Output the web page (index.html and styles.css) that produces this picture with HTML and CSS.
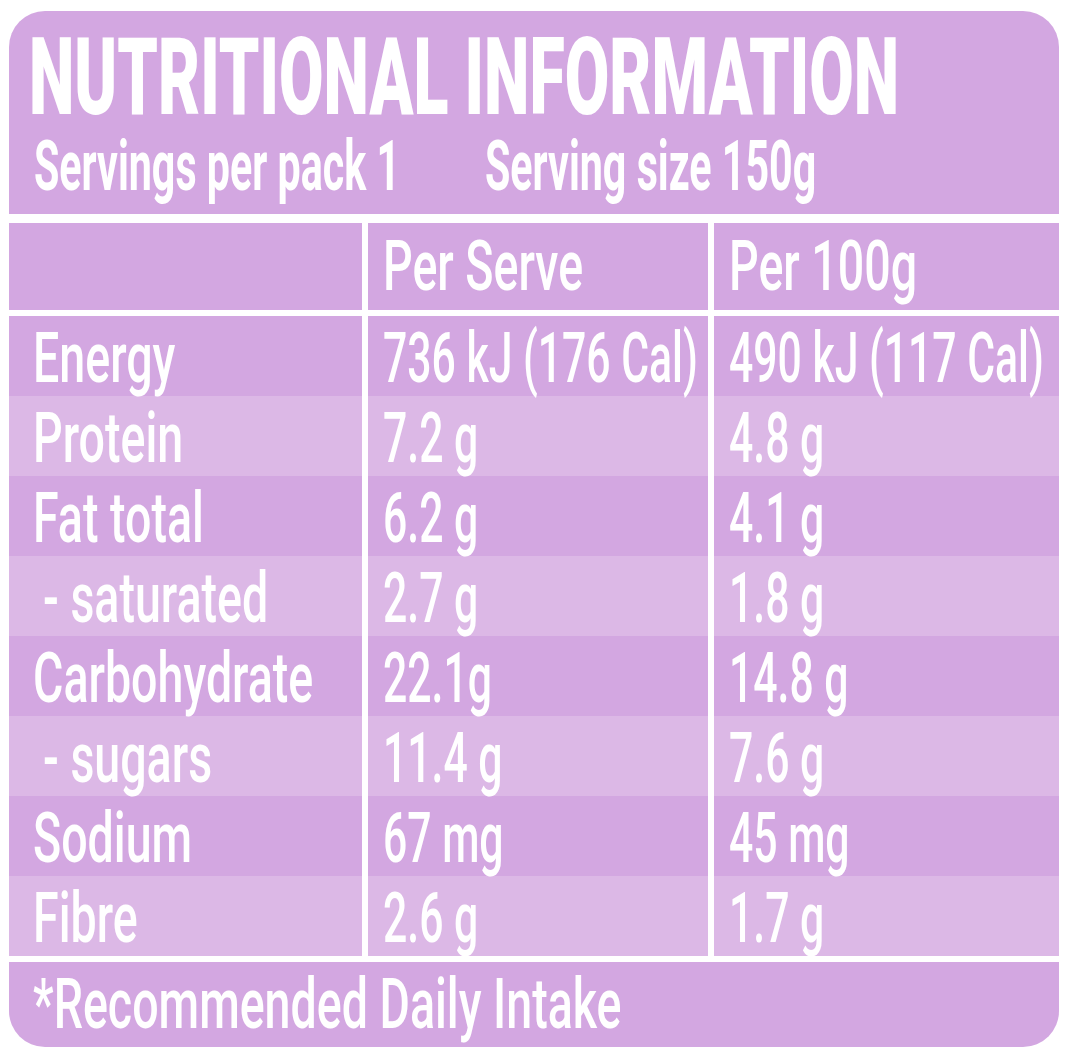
FILE: index.html
```html
<!DOCTYPE html>
<html lang="en">
<head>
<meta charset="utf-8">
<title>Nutritional Information</title>
<link rel="stylesheet" href="styles.css">
</head>
<body>
<div class="card">
  <header class="head">
    <h1 class="title"><span class="sq sq-title">NUTRITIONAL INFORMATION</span></h1>
    <div class="serving">
      <span class="serving-a"><span class="sq sq-sub">Servings per pack 1</span></span>
      <span class="serving-b"><span class="sq sq-sub">Serving size 150g</span></span>
    </div>
  </header>

  <div class="grid thead">
    <div class="cell c1"></div>
    <div class="cell c2"><span class="sq sq-wide">Per Serve</span></div>
    <div class="cell c3"><span class="sq sq-wide">Per 100g</span></div>
  </div>

  <div class="grid tbody">
    <div class="cell c1 dark"><span class="sq sq-wide">Energy</span></div>
    <div class="cell c2 dark"><span class="sq">736 kJ (176 Cal)</span></div>
    <div class="cell c3 dark"><span class="sq">490 kJ (117 Cal)</span></div>

    <div class="cell c1 light"><span class="sq sq-wide">Protein</span></div>
    <div class="cell c2 light"><span class="sq">7.2 g</span></div>
    <div class="cell c3 light"><span class="sq">4.8 g</span></div>

    <div class="cell c1 dark"><span class="sq sq-wide">Fat total</span></div>
    <div class="cell c2 dark"><span class="sq">6.2 g</span></div>
    <div class="cell c3 dark"><span class="sq">4.1 g</span></div>

    <div class="cell c1 light sub"><span class="sq sq-wide">- saturated</span></div>
    <div class="cell c2 light"><span class="sq">2.7 g</span></div>
    <div class="cell c3 light"><span class="sq">1.8 g</span></div>

    <div class="cell c1 dark"><span class="sq sq-wide">Carbohydrate</span></div>
    <div class="cell c2 dark"><span class="sq">22.1g</span></div>
    <div class="cell c3 dark"><span class="sq">14.8 g</span></div>

    <div class="cell c1 light sub"><span class="sq sq-wide">- sugars</span></div>
    <div class="cell c2 light"><span class="sq">11.4 g</span></div>
    <div class="cell c3 light"><span class="sq">7.6 g</span></div>

    <div class="cell c1 dark"><span class="sq sq-wide">Sodium</span></div>
    <div class="cell c2 dark"><span class="sq">67 mg</span></div>
    <div class="cell c3 dark"><span class="sq">45 mg</span></div>

    <div class="cell c1 light"><span class="sq sq-wide">Fibre</span></div>
    <div class="cell c2 light"><span class="sq">2.6 g</span></div>
    <div class="cell c3 light"><span class="sq">1.7 g</span></div>
  </div>

  <footer class="foot"><span class="sq sq-wide">*Recommended Daily Intake</span></footer>
</div>
</body>
</html>
```

FILE: styles.css
```css
html, body {
  margin: 0;
  padding: 0;
  background: #ffffff;
}

body {
  font-family: Roboto, "Liberation Sans", Arial, sans-serif;
  color: #ffffff;
}

.card {
  width: 1050px;
  margin: 11px 0 0 9px;
  border-radius: 36px;
  overflow: hidden;
}

.sq {
  display: inline-block;
  white-space: pre;
  transform: scaleX(0.61);
  transform-origin: 0 50%;
}

.sq-wide {
  transform: scaleX(0.665);
}

.head {
  box-sizing: border-box;
  height: 203px;
  padding: 13px 0 0 20px;
  background: #d3a7e1;
}

.title {
  margin: 0;
  font-size: 108px;
  line-height: 106px;
  font-weight: 900;
}

.sq-title {
  transform: scaleX(0.598);
}

.serving {
  display: flex;
  padding-left: 5px;
  font-size: 71px;
  line-height: 72px;
  font-weight: 700;
}

.serving-a {
  width: 451px;
}

.sq-sub {
  transform: scaleX(0.58);
}

.grid {
  display: grid;
  grid-template-columns: 353px 340px 345px;
  column-gap: 6px;
}

.thead {
  margin-top: 9px;
  margin-bottom: 6px;
}

.cell {
  box-sizing: border-box;
  font-size: 70px;
  font-weight: 500;
}

.thead .cell {
  height: 87px;
  line-height: 87px;
  background: #d3a7e1;
}

.tbody .cell {
  height: 80px;
  padding-top: 4px;
  line-height: 76px;
}

.c1 { padding-left: 24px; }
.c2 { padding-left: 15px; }
.c3 { padding-left: 15px; }
.c1.sub { padding-left: 34px; }

.dark { background: #d3a7e1; }
.light { background: #dcb8e6; }

.foot {
  box-sizing: border-box;
  height: 85px;
  margin-top: 6px;
  padding-left: 24px;
  font-size: 70px;
  font-weight: 500;
  line-height: 85px;
  background: #d3a7e1;
}
```
